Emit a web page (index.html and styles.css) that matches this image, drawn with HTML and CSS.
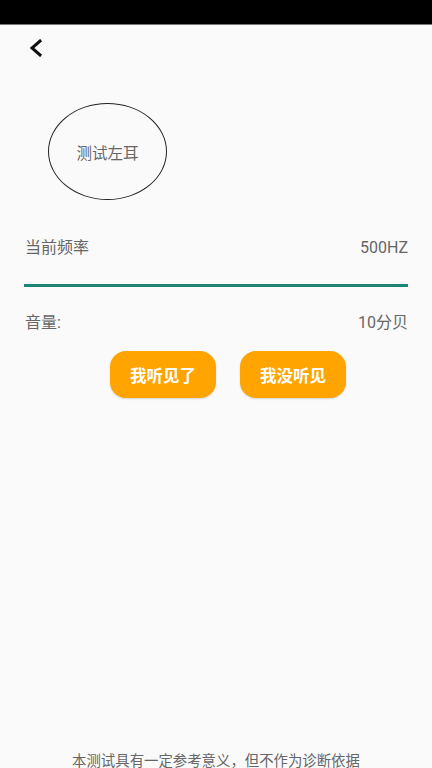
FILE: index.html
```html
<!DOCTYPE html>
<html>
<head>
<meta charset="utf-8">
<link rel="stylesheet" href="styles.css">
</head>
<body>
<div class="status"></div>
<div class="page">
  <div class="topbar">
    <svg class="back" width="16" height="18" viewBox="0 0 16 18"><path d="M12 2 L4 9 L12 16" fill="none" stroke="#111" stroke-width="3" stroke-linecap="square" stroke-linejoin="miter"/></svg>
  </div>
  <div class="ear-wrap">
    <div class="ear">测试左耳</div>
  </div>
  <div class="row freq">
    <span>当前频率</span>
    <span>500HZ</span>
  </div>
  <div class="bar"></div>
  <div class="row vol">
    <span>音量:</span>
    <span>10分贝</span>
  </div>
  <div class="buttons">
    <div class="btn">我听见了</div>
    <div class="btn">我没听见</div>
  </div>
  <div class="spacer"></div>
  <div class="note">本测试具有一定参考意义，但不作为诊断依据</div>
</div>
</body>
</html>
```
FILE: styles.css
```css
html, body {
  margin: 0;
  padding: 0;
  background: #fafafa;
  height: 100%;
  overflow: hidden;
}
body {
  font-family: Roboto, "Noto Sans CJK SC", sans-serif;
  width: 432px;
  height: 768px;
}
.status {
  height: 24px;
  background: #000;
  border-bottom: 1px solid #777;
}
.page {
  display: flex;
  flex-direction: column;
  height: 743px;
}
.topbar {
  height: 78px;
  padding-left: 28px;
  padding-top: 14px;
  box-sizing: border-box;
}
.back {
  display: block;
}
.ear-wrap {
  padding-left: 48px;
  height: 133px;
}
.ear {
  width: 117px;
  height: 95px;
  border: 1px solid #222;
  border-radius: 50%;
  display: flex;
  align-items: center;
  justify-content: center;
  font-size: 15.5px;
  color: #666;
}
.row {
  display: flex;
  justify-content: space-between;
  padding: 0 24px 0 25px;
  font-size: 16px;
  color: #666;
  line-height: 24px;
}
.bar {
  margin: 24px 24px 0 24px;
  height: 3px;
  background: #1c8574;
}
.vol {
  margin-top: 24px;
}
.buttons {
  display: flex;
  justify-content: center;
  gap: 24px;
  margin-top: 16px;
  padding-left: 24px;
}
.btn {
  width: 106px;
  height: 47px;
  border-radius: 16px;
  background: #ffa400;
  color: #fff;
  font-weight: bold;
  font-size: 16.5px;
  display: flex;
  align-items: center;
  justify-content: center;
  box-shadow: 0 1px 2px rgba(0,0,0,0.15);
}
.spacer {
  flex: 1;
}
.note {
  text-align: center;
  font-size: 14.4px;
  color: #666;
  line-height: 18px;
  height: 18px;
  margin-bottom: -3px;
}
```
